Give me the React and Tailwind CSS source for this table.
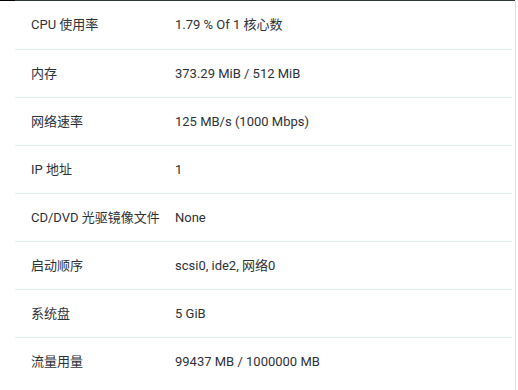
import React from 'react';

const rows = [
  ['CPU 使用率', '1.79 % Of 1 核心数'],
  ['内存', '373.29 MiB / 512 MiB'],
  ['网络速率', '125 MB/s (1000 Mbps)'],
  ['IP 地址', '1'],
  ['CD/DVD 光驱镜像文件', 'None'],
  ['启动顺序', 'scsi0, ide2, 网络0'],
  ['系统盘', '5 GiB'],
  ['流量用量', '99437 MB / 1000000 MB'],
];

const App = () => {
  return (
    <div
      className="w-[518px] h-[390px] overflow-hidden bg-white text-[13px] text-[#2d3138]"
      style={{ fontFamily: 'Roboto, "Noto Sans CJK SC", sans-serif' }}
    >
      <div className="flex h-px">
        <div className="w-[15px] bg-black" />
        <div className="w-[500px] bg-[#2e3a36]" />
        <div className="flex-1 bg-white" />
      </div>
      <div className="flex">
        <div className="w-[15px] shrink-0" />
        <div className="w-[497px] shrink-0">
          {rows.map(([label, value], idx) => (
            <div
              key={idx}
              className={`flex items-center h-[48px] ${idx > 0 ? 'border-t border-[#dcf3ec]' : ''}`}
            >
              <div className="w-[160px] pl-4 shrink-0">{label}</div>
              <div>{value}</div>
            </div>
          ))}
        </div>
        <div className="w-[3px] shrink-0" />
        <div className="w-px h-[400px] bg-[#bdeed6] shrink-0" />
      </div>
    </div>
  );
};

export default App;
